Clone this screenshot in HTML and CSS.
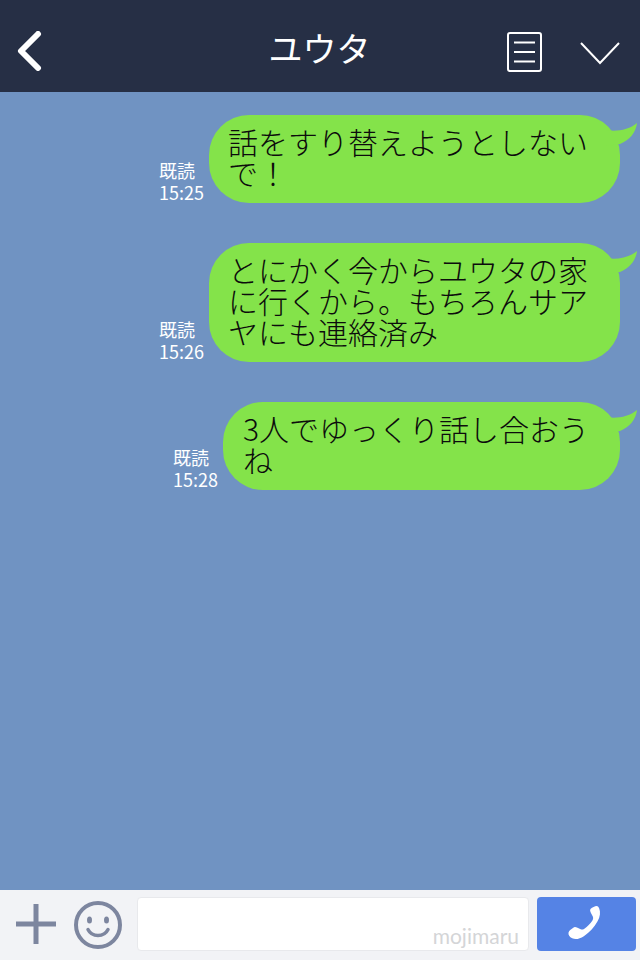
FILE: index.html
```html
<!DOCTYPE html>
<html lang="ja">
	<head>
		<meta charset="UTF-8" />
		<meta name="viewport" content="width=device-width, initial-scale=1.0" />
		<title>ユウタ</title>
		<link rel="stylesheet" href="styles.css">
	</head>
	<body>
		<div id="container">
			<header class="top-bar">
				<svg class="back-icon" viewBox="0 0 26 40" width="26" height="40">
					<path d="M22 3 5 20l17 17" fill="none" stroke="#fff" stroke-width="6" stroke-linecap="round" stroke-linejoin="round" />
				</svg>
				<h1 class="title">ユウタ</h1>
				<svg class="menu-icon" viewBox="0 0 36 42" width="36" height="42">
					<rect x="1" y="1" width="33" height="38" rx="2" fill="none" stroke="#fff" stroke-width="2" />
					<path d="M7 10.500h21M7 20h21M7 29.500h21" stroke="#fff" stroke-width="2" />
				</svg>
				<svg class="down-icon" viewBox="0 0 42 24" width="42" height="24">
					<path d="M2 2 21 22 40 2" fill="none" stroke="#fff" stroke-width="2" />
				</svg>
			</header>

			<main class="messages">
				<div class="row">
					<div class="meta">既読<br>15:25</div>
					<div class="bubble">話をすり替えようとしない<br>で！</div>
				</div>
				<div class="row">
					<div class="meta">既読<br>15:26</div>
					<div class="bubble">とにかく今からユウタの家<br>に行くから。もちろんサア<br>ヤにも連絡済み</div>
				</div>
				<div class="row">
					<div class="meta">既読<br>15:28</div>
					<div class="bubble bubble-short">3人でゆっくり話し合おう<br>ね</div>
				</div>
			</main>

			<footer class="input-bar">
				<svg class="plus-icon" viewBox="0 0 42 42" width="42" height="42">
					<path d="M21 1v40M1 21h40" stroke="#7d869f" stroke-width="5" />
				</svg>
				<svg class="smile-icon" viewBox="0 0 50 50" width="50" height="50">
					<circle cx="25" cy="25" r="22" fill="none" stroke="#7d869f" stroke-width="4" />
					<ellipse cx="16.500" cy="20" rx="2.500" ry="3.500" fill="#7d869f" />
					<ellipse cx="33.500" cy="20" rx="2.500" ry="3.500" fill="#7d869f" />
					<path d="M15 29.500c4 8 16 8 20 0" fill="none" stroke="#7d869f" stroke-width="3.500" stroke-linecap="round" />
				</svg>
				<div class="input-box"><span class="watermark">mojimaru</span></div>
				<div class="call-button">
					<svg viewBox="0 0 36 36" width="38" height="38">
						<path d="M27 1c-1.500 0-4 1.500-5.500 2.500-1 1-.5 2.500.5 4.500l1.500 3c.5 1.500.5 2.500-.5 4-2 3-4.500 5.500-7.500 7.500-1.500 1-2.500 1-3.500.5l-3-1.500c-2-1-3-1-4 0-1.500 1-4 2.500-4.500 4.500-.5 2 1 4.500 3.500 5.500 3.500 1.500 7 .5 11-2 5.500-3.500 10-8.500 13-14 2.500-4.500 3-9 1.500-12.500C29 2.500 28.500 1 27 1z" fill="#fff" />
					</svg>
				</div>
			</footer>
		</div>
	</body>
</html>
```

FILE: styles.css
```css
:root {
	--header-bg-color: #262f45;
	--chat-bg-color: #7093c2;
	--bubble-color: #84e34a;
	--input-bar-color: #f2f3f6;
	--call-color: #5583e5;
}
body {
	margin: 0;
	padding: 0;
	font-family: "Noto Sans CJK JP", "Noto Sans", sans-serif;
}
#container {
	width: 640px;
	height: 960px;
	display: flex;
	flex-direction: column;
	overflow: hidden;
	background-color: var(--chat-bg-color);
}
.top-bar {
	height: 92px;
	flex: none;
	display: flex;
	align-items: center;
	padding: 14px 19px 0 16px;
	box-sizing: border-box;
	background-color: var(--header-bg-color);
}
.back-icon {
	flex: none;
	margin-top: -4px;
}
.title {
	flex: 1;
	margin: 0 0 10px;
	padding-left: 90px;
	font-size: 34px;
	font-weight: 400;
	line-height: 40px;
	text-align: center;
	color: #fff;
}
.menu-icon {
	flex: none;
	margin-right: 36px;
}
.down-icon {
	flex: none;
}
.messages {
	flex: 1;
	display: flex;
	flex-direction: column;
	gap: 40px;
	padding: 23px 20px 0 0;
}
.row {
	display: flex;
	justify-content: flex-end;
	align-items: flex-end;
	gap: 5px;
}
.meta {
	font-size: 18px;
	line-height: 22px;
	color: #fff;
}
.bubble {
	position: relative;
	min-width: 372px;
	padding: 11px 20px 15px 19px;
	border-radius: 40px;
	font-size: 30px;
	font-weight: 300;
	line-height: 31px;
	white-space: nowrap;
	color: #0c0c0c;
	background-color: var(--bubble-color);
}
.bubble-short {
	min-width: 357px;
	padding-left: 20px;
}
.bubble::after {
	content: "";
	position: absolute;
	top: 7px;
	right: -18px;
	width: 32px;
	height: 26px;
	background-color: var(--bubble-color);
	clip-path: path("M0 8C10 10 23 8 31 1C30 10 24 18 14 22L0 24Z");
}
.input-bar {
	height: 70px;
	flex: none;
	display: flex;
	align-items: center;
	padding: 0 4px 2px 15px;
	box-sizing: border-box;
	background-color: var(--input-bar-color);
}
.plus-icon {
	flex: none;
	margin-right: 16px;
}
.smile-icon {
	flex: none;
	margin-right: 14px;
	margin-top: 2px;
}
.input-box {
	flex: 1;
	height: 54px;
	display: flex;
	align-items: flex-end;
	justify-content: flex-end;
	padding: 0 9px 1px 0;
	box-sizing: border-box;
	border: 1px solid #e8e9ec;
	border-radius: 4px;
	background-color: #fff;
}
.watermark {
	font-family: "Lato", sans-serif;
	font-size: 21px;
	line-height: 26px;
	color: #d4d5d7;
}
.call-button {
	flex: none;
	width: 99px;
	height: 54px;
	margin-left: 8px;
	display: flex;
	align-items: center;
	justify-content: center;
	border-radius: 4px;
	background-color: var(--call-color);
}
```
